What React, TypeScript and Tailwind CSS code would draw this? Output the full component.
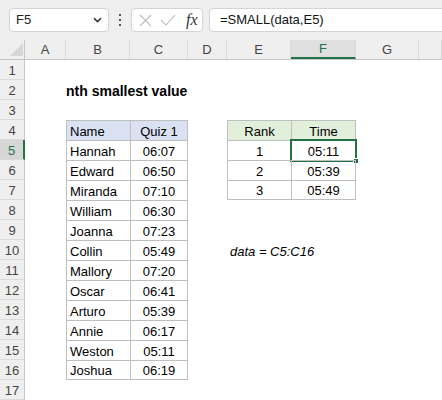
import React from "react";

// Excel-style sheet: nth smallest value with SMALL()
const COLS = [
  { k: "A", w: "w-[41px]" },
  { k: "B", w: "w-[64px]" },
  { k: "C", w: "w-[58px]" },
  { k: "D", w: "w-[39px]" },
  { k: "E", w: "w-[64px]" },
  { k: "F", w: "w-[65px]" },
  { k: "G", w: "w-[63px]" },
  { k: "H", w: "flex-1" },
];

const quiz: [string, string][] = [
  ["Hannah", "06:07"],
  ["Edward", "06:50"],
  ["Miranda", "07:10"],
  ["William", "06:30"],
  ["Joanna", "07:23"],
  ["Collin", "05:49"],
  ["Mallory", "07:20"],
  ["Oscar", "06:41"],
  ["Arturo", "05:39"],
  ["Annie", "06:17"],
  ["Weston", "05:11"],
  ["Joshua", "06:19"],
];

const ranks: [string, string][] = [
  ["1", "05:11"],
  ["2", "05:39"],
  ["3", "05:49"],
];

type Cell = { text?: React.ReactNode; cls?: string; selected?: boolean };

function cellsForRow(r: number): Record<string, Cell> {
  const out: Record<string, Cell> = {};
  const bd = "border-[#bfbfbf]";
  if (r === 2) {
    out.B = { text: "nth smallest value", cls: "font-bold text-[14px] whitespace-nowrap overflow-visible" };
  }
  if (r === 4) {
    out.B = { text: "Name", cls: `bg-[#d9e1f2] border-t border-l ${bd} pl-[3px]` };
    out.C = { text: "Quiz 1", cls: `bg-[#d9e1f2] border-t border-l border-r ${bd} justify-center` };
    out.E = { text: "Rank", cls: `bg-[#e2efda] border-t border-l ${bd} justify-center` };
    out.F = { text: "Time", cls: `bg-[#e2efda] border-t border-l border-r ${bd} justify-center` };
  }
  if (r >= 5 && r <= 16) {
    const [n, t] = quiz[r - 5];
    const last = r === 16 ? "border-b" : "";
    out.B = { text: n, cls: `border-t border-l ${last} ${bd} pl-[3px]` };
    out.C = { text: t, cls: `border-t border-l border-r ${last} ${bd} justify-center` };
  }
  if (r >= 5 && r <= 7) {
    const [k, t] = ranks[r - 5];
    const last = r === 7 ? "border-b" : "";
    out.E = { text: k, cls: `border-t border-l ${last} ${bd} justify-center` };
    out.F = { text: t, cls: `border-t border-l border-r ${last} ${bd} justify-center`, selected: r === 5 };
  }
  if (r === 10) {
    out.E = { text: "data = C5:C16", cls: "italic whitespace-nowrap pl-[3px]" };
  }
  return out;
}

function Toolbar() {
  return (
    <div className="h-[40px] bg-[#efefef] flex items-center relative">
      {/* Name box */}
      <div className="ml-[9px] w-[100px] h-[24px] bg-white border border-[#d4d4d4] rounded-[4px] flex items-center justify-between pl-[6px] pr-[6px]">
        <span className="text-[13px] text-[#222]">F5</span>
        <svg width="9" height="6" viewBox="0 0 9 6">
          <path d="M1 1.2 L4.5 4.6 L8 1.2" fill="none" stroke="#333" strokeWidth="1.6" />
        </svg>
      </div>
      {/* dots */}
      <div className="w-[22px] flex flex-col items-center gap-[3px]">
        <div className="w-[2px] h-[2px] bg-[#555]" />
        <div className="w-[2px] h-[2px] bg-[#555]" />
        <div className="w-[2px] h-[2px] bg-[#555]" />
      </div>
      {/* X check fx */}
      <div className="w-[72px] h-[24px] bg-white border border-[#d4d4d4] rounded-[4px] flex items-center pl-[7px]">
        <svg width="13" height="13" viewBox="0 0 13 13">
          <path d="M1 1 L12 12 M12 1 L1 12" stroke="#bdbdbd" strokeWidth="1.1" fill="none" />
        </svg>
        <svg width="16" height="12" viewBox="0 0 16 12" className="ml-[8px]">
          <path d="M1 6 L6 11 L15 1" stroke="#bdbdbd" strokeWidth="1.1" fill="none" />
        </svg>
        <span className="ml-[10px] italic text-[16px] text-[#333] leading-none font-['Liberation_Serif',serif]">fx</span>
      </div>
      {/* Formula input */}
      <div className="ml-[6px] flex-1 h-[24px] bg-white border border-r-0 border-[#d4d4d4] rounded-l-[4px] flex items-center pl-[10px]">
        <span className="text-[13px] text-[#111]">=SMALL(data,E5)</span>
      </div>
    </div>
  );
}

function HeaderRow() {
  return (
    <div className="h-[20px] flex bg-[#efefef] border-b border-[#c6c6c6]">
      <div className="w-[25px] shrink-0 border-r border-[#c6c6c6] relative">
        <svg width="14" height="14" viewBox="0 0 14 14" className="absolute left-[10px] top-[3px]">
          <path d="M13 0 L13 13 L0 13 Z" fill="#d6d6d6" />
        </svg>
      </div>
      {COLS.map((c) => {
        const sel = c.k === "F";
        return (
          <div
            key={c.k}
            className={`${c.w} shrink-0 flex items-center justify-center text-[13px] ${
              sel
                ? "bg-[#e0e0e0] text-[#217346] border-b-2 border-[#217346] border-r border-r-[#dadada]"
                : "text-[#444] border-r border-[#dadada]"
            }`}
          >
            {c.k === "H" ? "" : c.k}
          </div>
        );
      })}
    </div>
  );
}

function SheetRow({ r }: { r: number }) {
  const cells = cellsForRow(r);
  const sel = r === 5;
  return (
    <div className="h-[20px] flex">
      <div
        className={`w-[25px] shrink-0 flex items-end justify-center leading-[17px] text-[13px] border-b border-[#dadada] ${
          sel
            ? "bg-[#d6d6d6] text-[#217346] border-r-2 border-r-[#217346]"
            : "bg-[#efefef] text-[#444] border-r border-r-[#c6c6c6]"
        }`}
      >
        {r}
      </div>
      {COLS.map((c) => {
        const cell = cells[c.k];
        return (
          <div
            key={c.k}
            className={`${c.w} shrink-0 h-[20px] relative flex items-end leading-[17px] text-[13px] text-black ${cell?.cls ?? ""}`}
          >
            {cell?.text}
            {cell?.selected && (
              <div className="absolute -left-[2px] -top-[2px] -right-[2px] -bottom-[2px] border-2 border-[#217346] pointer-events-none">
                <div className="absolute -right-[4px] -bottom-[4px] w-[6px] h-[6px] bg-[#217346] border border-white" />
              </div>
            )}
          </div>
        );
      })}
    </div>
  );
}

export default function App() {
  const rows = Array.from({ length: 17 }, (_, i) => i + 1);
  return (
    <div className="w-[442px] h-[400px] overflow-hidden bg-white font-['Liberation_Sans',Arial,sans-serif]">
      <Toolbar />
      <HeaderRow />
      {rows.map((r) => (
        <SheetRow key={r} r={r} />
      ))}
    </div>
  );
}
